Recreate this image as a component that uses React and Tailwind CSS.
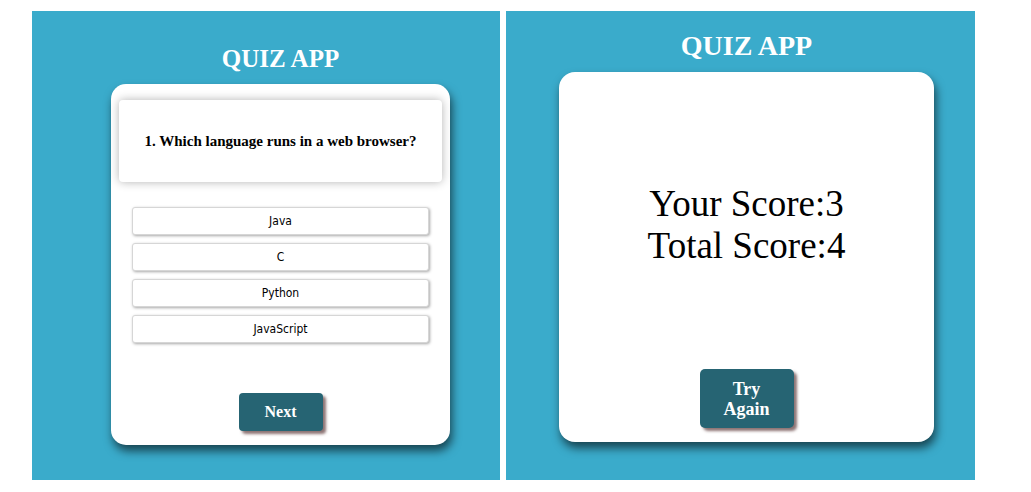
const options = ['Java', 'C', 'Python', 'JavaScript'];

const serif = "font-['Liberation_Serif','Times_New_Roman',serif]";

const QuizPanel = () => (
  <div className="w-[468px] h-[469px] bg-[#3aabcb] flex flex-col items-center pl-[29px]">
    <h1 className={`${serif} mt-[33px] mb-[10px] text-[25px] leading-[30px] font-bold text-white`}>QUIZ APP</h1>
    <div className="w-[339px] h-[361px] rounded-[15px] bg-white px-2 pt-4 flex flex-col shadow-[2px_6px_10px_rgba(0,0,0,0.6)]">
      {/* Question */}
      <div className="h-[82px] rounded-[4px] bg-white flex items-center justify-center shadow-[0_0_10px_rgba(0,0,0,0.3)]">
        <p className={`${serif} text-[15px] font-bold text-black`}>1. Which language runs in a web browser?</p>
      </div>

      {/* Options */}
      <div className="mt-[25px] px-[13px] flex flex-col gap-2">
        {options.map((opt) => (
          <button
            key={opt}
            className="h-[28px] w-full rounded-[3px] border border-[#d6d6d6] bg-white text-[12px] text-black font-['DejaVu_Sans',sans-serif] font-stretch-condensed shadow-[1px_1px_3px_rgba(0,0,0,0.35)]"
          >
            {opt}
          </button>
        ))}
      </div>

      <button className={`${serif} mt-auto mb-[14px] self-center w-[84px] h-[38px] rounded-[4px] bg-[#266473] text-white text-[16px] font-bold shadow-[3px_3px_3px_rgba(120,90,90,0.85)]`}>
        Next
      </button>
    </div>
  </div>
);

const ScorePanel = () => (
  <div className="w-[469px] h-[469px] bg-[#3aabcb] flex flex-col items-center pl-[12px]">
    <h1 className={`${serif} mt-[19px] mb-[10px] text-[28px] leading-[32px] font-bold text-white`}>QUIZ APP</h1>
    <div className="w-[375px] h-[370px] rounded-[16px] bg-white flex flex-col items-center pt-[111px] shadow-[2px_6px_10px_rgba(0,0,0,0.6)]">
      <p className={`${serif} text-[37px] text-black text-center leading-[42px]`}>
        Your Score:3
        <br />
        Total Score:4
      </p>
      <button className={`${serif} mt-auto mb-[14px] w-[94px] h-[59px] rounded-[5px] bg-[#266473] text-white text-[18px] leading-[20px] font-bold shadow-[3px_3px_3px_rgba(120,90,90,0.85)]`}>
        Try
        <br />
        Again
      </button>
    </div>
  </div>
);

export default function App() {
  return (
    <div className="w-[1031px] h-[492px] bg-white pt-[11px] pl-[32px] flex gap-[6px]">
      <QuizPanel />
      <ScorePanel />
    </div>
  );
}
